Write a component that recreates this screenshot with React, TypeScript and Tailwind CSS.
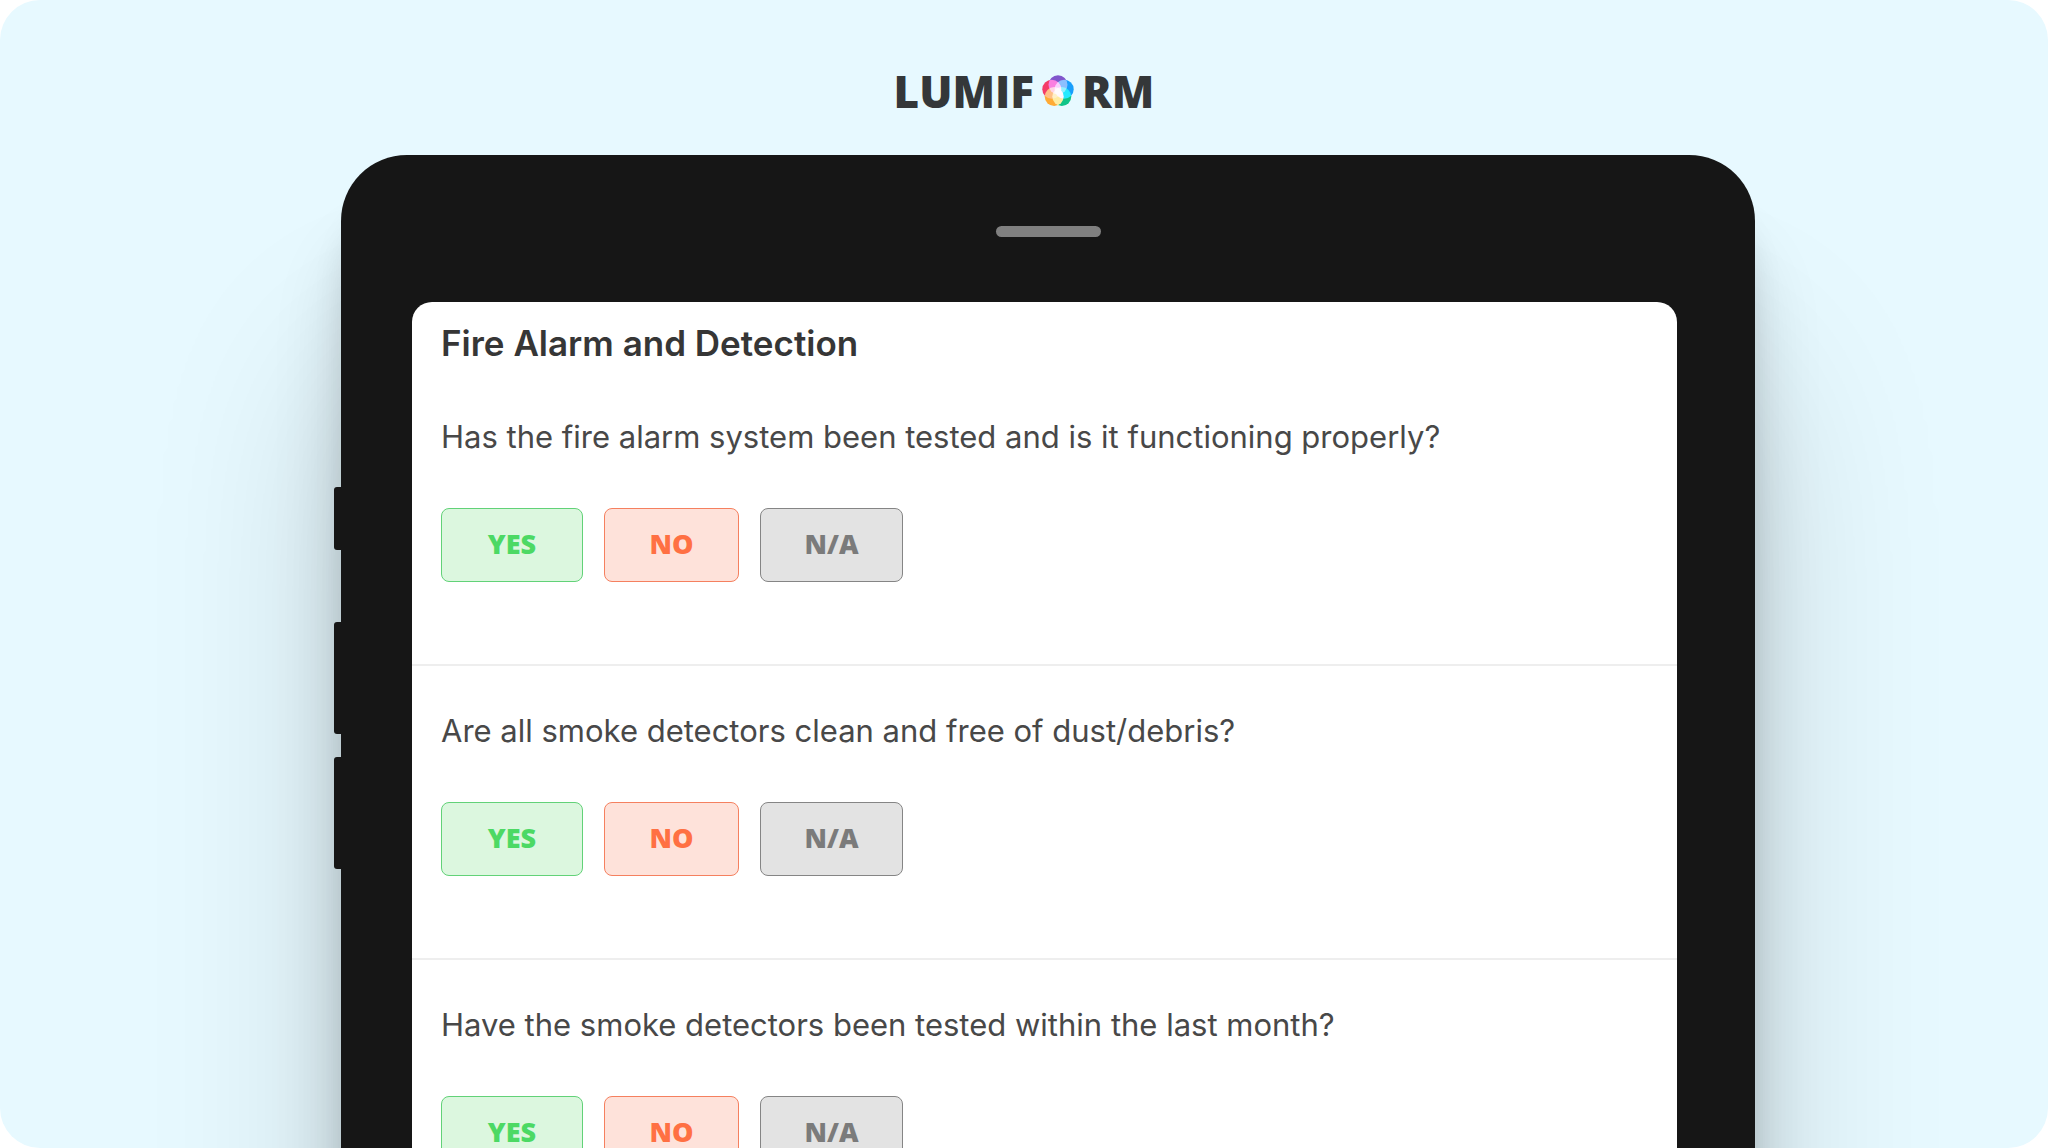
const questions = [
  "Has the fire alarm system been tested and is it functioning properly?",
  "Are all smoke detectors clean and free of dust/debris?",
  "Have the smoke detectors been tested within the last month?",
];

const answers = [
  {
    label: "YES",
    className: "w-[142px] border-[#62d278] bg-[#dcf7df] text-[#4cd964]",
  },
  {
    label: "NO",
    className: "w-[135px] border-[#f5805f] bg-[#fee2da] text-[#ff7043]",
  },
  {
    label: "N/A",
    className: "w-[143px] border-[#858585] bg-[#e3e3e3] text-[#7b7b7b]",
  },
];

function Logo() {
  return (
    <div className="flex items-center justify-center gap-2 font-['Open_Sans',sans-serif] text-[44px] leading-12 font-extrabold text-[#343739]">
      <span>LUMIF</span>
      <svg viewBox="0 0 32 32" className="h-8 w-8 isolate" role="img" aria-label="O">
        <circle className="mix-blend-screen" cx="16" cy="9.8" r="9.5" fill="#8056cc" />
        <circle className="mix-blend-screen" cx="22.2" cy="14.2" r="9.5" fill="#189ffc" />
        <circle className="mix-blend-screen" cx="19.8" cy="21.6" r="9.5" fill="#10c488" />
        <circle className="mix-blend-screen" cx="12.2" cy="21.6" r="9.5" fill="#ffab35" />
        <circle className="mix-blend-screen" cx="9.8" cy="14.2" r="9.5" fill="#f43c68" />
      </svg>
      <span>RM</span>
    </div>
  );
}

function Question({ text }: { text: string }) {
  return (
    <fieldset className="border-b-2 border-[#eeeeee] px-[29px] pt-[45px] pb-[82px]">
      <legend className="contents">
        <span className="block text-[31px] leading-10 text-[#484848]">
          {text}
        </span>
      </legend>
      <div className="mt-[51px] flex gap-[21px]">
        {answers.map((answer) => (
          <button
            key={answer.label}
            type="button"
            className={`h-[74px] rounded-lg border pb-0.5 font-['Open_Sans',sans-serif] text-[27px] font-extrabold ${answer.className}`}
          >
            {answer.label}
          </button>
        ))}
      </div>
    </fieldset>
  );
}

export default function App() {
  return (
    <div className="bg-white">
      <main className="flex h-screen flex-col overflow-hidden rounded-[40px] bg-[#e7f9ff] font-['Inter',sans-serif]">
        <header className="shrink-0 pt-[67px] pb-10">
          <Logo />
        </header>

        {/* Tablet */}
        <div className="relative mr-[293px] ml-[341px] shrink-0 rounded-[66px] bg-[#161616] pt-[71px] pr-[78px] pb-20 pl-[71px] shadow-[0_210px_190px_rgba(0,0,0,0.17),0_90px_70px_rgba(0,0,0,0.14),0_50px_30px_rgba(0,0,0,0.08)]">
          {/* Side buttons */}
          <div className="absolute top-[332px] -left-[7px] h-[63px] w-3 rounded-l-[3px] bg-[#161616]"></div>
          <div className="absolute top-[467px] -left-[7px] h-[112px] w-3 rounded-l-[3px] bg-[#161616]"></div>
          <div className="absolute top-[602px] -left-[7px] h-[112px] w-3 rounded-l-[3px] bg-[#161616]"></div>

          {/* Speaker */}
          <div className="flex justify-center pl-[7px]">
            <div className="h-[11px] w-[105px] rounded-full bg-[#808080]"></div>
          </div>

          {/* Screen */}
          <section className="mt-[65px] rounded-[20px] bg-white pt-[21px]">
            <h1 className="mb-[9px] px-[29px] text-[35px] leading-10 font-semibold text-[#363636]">
              Fire Alarm and Detection
            </h1>
            {questions.map((question) => (
              <Question key={question} text={question} />
            ))}
          </section>
        </div>
      </main>
    </div>
  );
}
